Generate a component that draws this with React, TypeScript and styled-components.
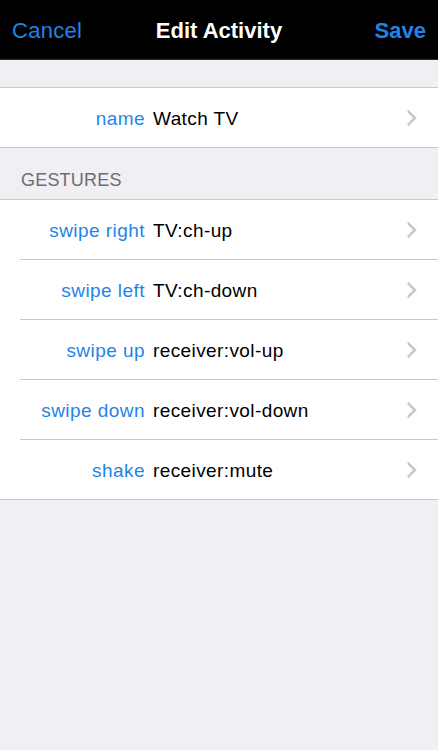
import React from "react";
import styled, { createGlobalStyle } from "styled-components";

const Global = createGlobalStyle`
  html, body { margin: 0; padding: 0; background: #efeff4; }
  body { font-family: "Liberation Sans", Arial, sans-serif; -webkit-font-smoothing: antialiased; }
  * { box-sizing: border-box; }
`;

const Page = styled.div`
  width: 438px;
  height: 750px;
  background: #efeff4;
  display: flex;
  flex-direction: column;
`;

const NavBar = styled.div`
  height: 60px;
  background: #000;
  display: grid;
  grid-template-columns: 1fr auto 1fr;
  align-items: center;
  padding: 0 12px;
  border-bottom: 1px solid #2a2a2a;
`;

const NavButton = styled.span<{ $bold?: boolean; $right?: boolean }>`
  color: #1f84e8;
  font-size: 22px;
  font-weight: ${(p) => (p.$bold ? 700 : 400)};
  letter-spacing: ${(p) => (p.$bold ? 0 : 0.3)}px;
  justify-self: ${(p) => (p.$right ? "end" : "start")};
  margin-top: 2px;
`;

const Title = styled.span`
  color: #fff;
  font-size: 22px;
  font-weight: 700;
  margin-top: 2px;
`;

const Spacer = styled.div<{ $h: number }>`
  height: ${(p) => p.$h}px;
`;

const Group = styled.div`
  background: #fff;
  border-top: 1px solid #c8c7cc;
  border-bottom: 1px solid #c8c7cc;
`;

const SectionHeader = styled.div`
  height: 51px;
  display: flex;
  align-items: flex-end;
  padding: 0 0 8px 21px;
  color: #6d6d72;
  font-size: 18px;
  letter-spacing: 0.2px;
`;

const RowWrap = styled.div`
  padding-left: 20px;
`;

const Row = styled.div<{ $last?: boolean }>`
  height: ${(p) => (p.$last ? 59 : 60)}px;
  display: grid;
  grid-template-columns: 125px 1fr auto;
  column-gap: 8px;
  align-items: center;
  padding: 2px 21px 0 0;
  border-bottom: ${(p) => (p.$last ? "none" : "1px solid #c8c7cc")};
`;

const Label = styled.span`
  color: #1f84e8;
  font-size: 19px;
  letter-spacing: 0.45px;
  text-align: right;
  white-space: nowrap;
`;

const Value = styled.span`
  color: #000;
  font-size: 19px;
  letter-spacing: 0.4px;
  white-space: nowrap;
`;

const ChevronBox = styled.svg`
  display: block;
  margin-top: -2px;
`;

const Chevron = () => (
  <ChevronBox width="10" height="16" viewBox="0 0 10 16">
    <path d="M1.8 1.8 L8 8 L1.8 14.2" fill="none" stroke="#c7c7cc" strokeWidth="2.6" strokeLinecap="square" />
  </ChevronBox>
);

const gestures = [
  ["swipe right", "TV:ch-up"],
  ["swipe left", "TV:ch-down"],
  ["swipe up", "receiver:vol-up"],
  ["swipe down", "receiver:vol-down"],
  ["shake", "receiver:mute"],
];

export default function App() {
  return (
    <>
      <Global />
      <Page>
        <NavBar>
          <NavButton>Cancel</NavButton>
          <Title>Edit Activity</Title>
          <NavButton $bold $right>Save</NavButton>
        </NavBar>
        <Spacer $h={27} />
        <Group>
          <RowWrap>
            <Row $last>
              <Label>name</Label>
              <Value>Watch TV</Value>
              <Chevron />
            </Row>
          </RowWrap>
        </Group>
        <SectionHeader>GESTURES</SectionHeader>
        <Group>
          {gestures.map(([l, v], i) => (
            <RowWrap key={l}>
              <Row $last={i === gestures.length - 1}>
                <Label>{l}</Label>
                <Value>{v}</Value>
                <Chevron />
              </Row>
            </RowWrap>
          ))}
        </Group>
      </Page>
    </>
  );
}
